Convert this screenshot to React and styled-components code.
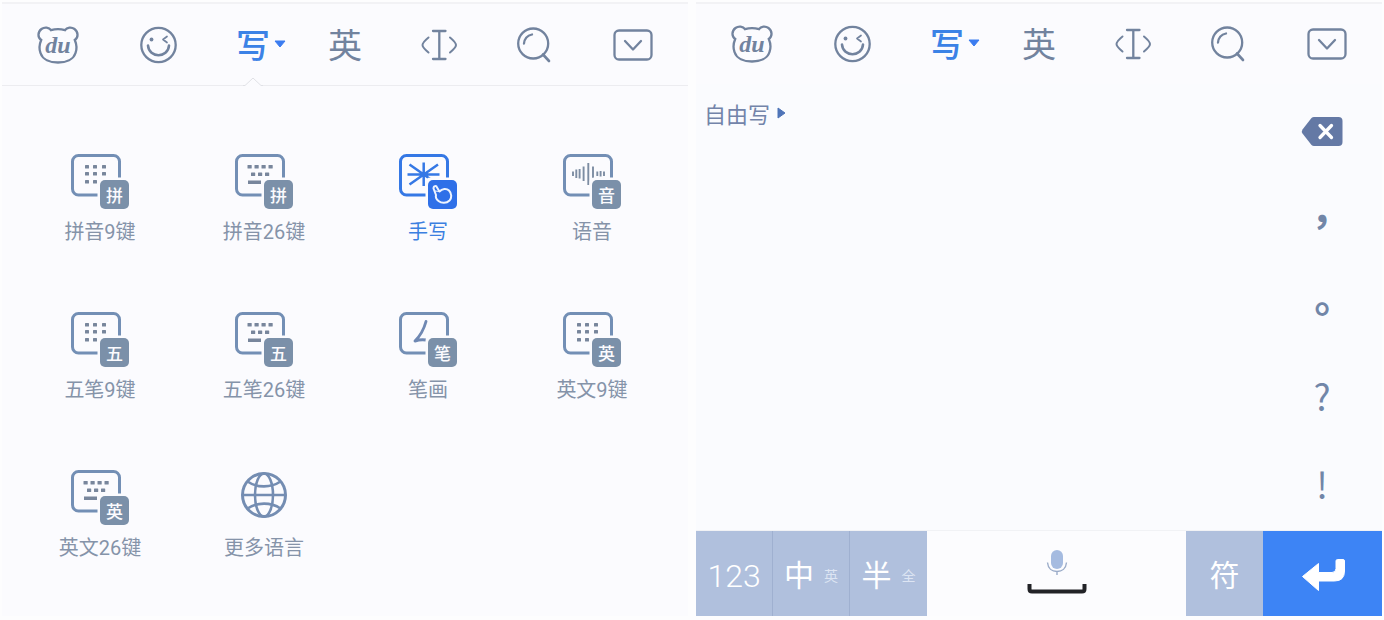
import React from "react";
import styled, { createGlobalStyle, css } from "styled-components";

const cjk = `"Noto Sans CJK SC", "Noto Sans", sans-serif`;

const GlobalStyle = createGlobalStyle`
* {
box-sizing: border-box;
}
body {
margin: 0;
background-color: #fdfdfe;
font-family: Roboto, ${cjk};
}
button {
margin: 0;
padding: 0;
border: none;
background: none;
font-family: inherit;
cursor: pointer;
}
svg {
display: block;
}
`;

const Page = styled.main`
display: grid;
grid-template-columns: 1fr 1fr;
gap: 8px;
padding: 2px;
`;

const Panel = styled.section`
display: flex;
flex-direction: column;
min-width: 0;
background-color: #fbfbfe;
border-top: 2px solid #f2f2f5;
`;

const Toolbar = styled.nav`
display: flex;
justify-content: space-between;
height: ${(props) => (props.$line ? "82px" : "80px")};
padding: 0 35px;
color: #72839e;
border-bottom: ${(props) => (props.$line ? "1px solid #ececf0" : "none")};
`;

const Tool = styled.button`
position: relative;
display: flex;
align-items: center;
justify-content: center;
width: ${(props) => props.$width}px;
color: inherit;
`;

const TextTool = styled(Tool)`
padding-bottom: 2px;
font-family: ${cjk};
font-size: 34px;
line-height: 40px;
white-space: nowrap;
${(props) =>
    props.$active &&
    css`
color: #3b82e6;
font-weight: 500;
`}
`;

// hangs past the glyph so the tools stay evenly spaced
const Caret = styled.svg`
flex: none;
margin-left: 4px;
margin-right: -16px;
`;

const Notch = styled.svg`
position: absolute;
left: 6px;
bottom: -1px;
`;

const Modes = styled.div`
display: grid;
grid-template-columns: repeat(4, 1fr);
row-gap: 66px;
padding: 66px 14px 56px 16px;
`;

const Mode = styled.button`
display: flex;
flex-direction: column;
align-items: center;
gap: 10px;
color: ${(props) => (props.$active ? "#3b7fe0" : "#8593a9")};
font-size: 20px;
line-height: 24px;
`;

const ModeIcon = styled.span`
position: relative;
width: 60px;
height: 58px;
color: ${(props) => (props.$active ? "#3578e5" : "#738fb5")};
`;

const Badge = styled.span`
position: absolute;
right: 1px;
bottom: 1px;
display: flex;
align-items: center;
justify-content: center;
width: 29px;
height: 29px;
border-radius: 5px;
background-color: ${(props) => (props.$active ? "#2f70e8" : "#7b90a9")};
color: #fbfbfe;
font-family: ${cjk};
font-size: 17px;
font-weight: 500;
line-height: 20px;
`;

const Writing = styled.div`
display: flex;
justify-content: space-between;
align-items: flex-start;
flex: 1;
padding-top: 3px;
background-color: #fafbfe;
`;

const FreeWrite = styled.button`
display: flex;
align-items: center;
gap: 7px;
padding: 12px 8px;
color: #7384aa;
font-family: ${cjk};
font-size: 22px;
line-height: 28px;
`;

const Symbols = styled.div`
display: flex;
flex-direction: column;
width: 120px;
`;

const SymbolKey = styled.button`
display: flex;
align-items: center;
justify-content: center;
height: 88px;
color: #7186a8;
font-family: "Noto Sans CJK TC", sans-serif;
font-size: ${(props) => (props.$wide ? "40px" : "36px")};
font-weight: ${(props) => (props.$wide ? 700 : 400)};
line-height: 40px;
`;

const KeyRow = styled.div`
display: flex;
height: 86px;
border-top: 1px solid #f1f2f5;
`;

const Key = styled.button`
display: flex;
align-items: center;
justify-content: center;
gap: 10px;
width: 77px;
padding-top: 4px;
background-color: #b0c0dd;
border-right: ${(props) => (props.$divided ? "1px solid #9fb0d0" : "none")};
color: #fff;
font-size: ${(props) => (props.$digits ? "32px" : "30px")};
font-weight: ${(props) => (props.$digits ? 300 : 400)};
line-height: 40px;
`;

const Alt = styled.small`
color: #dde5f3;
font-size: 14px;
line-height: 20px;
`;

const SpaceKey = styled(Key)`
flex: 1;
flex-direction: column;
gap: 7px;
padding: 0 0 4px;
background-color: #fcfcfe;
`;

const EnterKey = styled(Key)`
width: 119px;
background-color: #3d84f5;
`;

const Bear = () => (
    <svg width="42" height="38" viewBox="0 0 42 38" fill="none" stroke="currentColor" strokeWidth="2.3">
        <path d="M14 4.2C18 3 24 3 28 4.2C30 1.200 34.500 .8 37.500 3C41.500 6 41.500 11.500 37.800 14C39.500 18 40 23 38.500 27C36.500 33.500 29 36.500 21 36.500C13 36.500 5.500 33.500 3.500 27C2 23 2.500 18 4.200 14C.5 11.500 .5 6 4.500 3C7.500 .8 12 1.200 14 4.200Z" />
        <text x="21" y="27" textAnchor="middle" fill="currentColor" stroke="none" fontFamily="Liberation Serif, serif" fontStyle="italic" fontWeight="700" fontSize="24">du</text>
    </svg>
);

const Smile = () => (
    <svg width="38" height="38" viewBox="0 0 38 38" fill="none" stroke="currentColor" strokeWidth="2.300" strokeLinecap="round" strokeLinejoin="round">
        <circle cx="19.500" cy="19" r="17.2" />
        <circle cx="12.500" cy="13.500" r="1.900" fill="currentColor" stroke="none" />
        <path d="M28 10.500L24 13.500L28 16.500" strokeWidth="1.700" />
        <path d="M9 19.500C9.500 26 14.500 29.300 19.500 29.300C24.500 29.300 29.500 26 30 19.500" strokeWidth="2.600" />
    </svg>
);

const Cursor = () => (
    <svg width="36" height="34" viewBox="0 0 36 34" fill="none" stroke="currentColor" strokeWidth="2.300" strokeLinecap="round">
        <path d="M12 3H24.500M12 31H24.500M18.300 3V31" />
        <path d="M7.500 9.500C4.500 12 1.500 15 1.500 17C1.500 19 4.500 22 7.500 24.500M29 9.500C32 12 35 15 35 17C35 19 32 22 29 24.500" strokeWidth="2" />
    </svg>
);

const Search = () => (
    <svg width="36" height="36" viewBox="0 0 36 36" fill="none" stroke="currentColor" strokeWidth="2.300" strokeLinecap="round">
        <circle cx="16.200" cy="16.500" r="15" />
        <path d="M7 16.500C7.500 11.500 10.500 8.500 15 7.500" />
        <path d="M26 27.500L32 34" strokeWidth="2.600" />
    </svg>
);

const Collapse = () => (
    <svg width="40" height="32" viewBox="0 0 40 32" fill="none" stroke="currentColor" strokeWidth="2.300" strokeLinecap="round" strokeLinejoin="round">
        <rect x="1.500" y="1.500" width="37" height="29" rx="4.500" />
        <path d="M12 12L20 20.500L28 12" />
    </svg>
);

const NotchMark = () => (
    <Notch width="20" height="9" viewBox="0 0 20 9">
        <path d="M1 9L10 1L19 9Z" fill="#fbfbfe" />
        <path d="M0 8.500H2L10 1L18 8.500H20" fill="none" stroke="#e0e1e6" />
    </Notch>
);

const Dots = () => (
    <g fill="#78869c">
        {[15, 22, 30].map((y) =>
            [17, 25, 34].map((x) => <rect key={`${x}-${y}`} x={x - 2} y={y - 2} width="4" height="3.500" rx=".5" />)
        )}
    </g>
);

const Keys = () => (
    <g fill="#78869c">
        {[15.500, 22.500, 29.500, 36.500].map((x) => <rect key={x} x={x - 2} y="13" width="4.200" height="3.500" rx=".5" />)}
        {[19, 26, 33].map((x) => <rect key={x} x={x - 2} y="20.500" width="4.200" height="3.500" rx=".5" />)}
        <rect x="14" y="28.500" width="13" height="3.500" />
    </g>
);

const Star = () => (
    <path d="M9.500 22.500H41.500M25.700 10.500V34M11.500 12.500L40 32.500M40 12.500L11.500 32.500" stroke="currentColor" strokeWidth="2.500" />
);

const Voice = () => (
    <path d="M11 19.500V24M14.300 17.500V26M17.600 17V26.500M21.600 14.500V29M26.300 11V33M31 14.500V29M35.300 19.500V24M38.600 19V24.500M42 19.500V24" stroke="#7d8da3" strokeWidth="1.900" />
);

const Stroke = () => (
    <path d="M28 11.500C26 19 22 26 17 31C20 30 24 29.500 28 30" fill="none" stroke="#6f88b3" strokeWidth="2.900" strokeLinecap="round" strokeLinejoin="round" />
);

const Hand = () => (
    <svg width="23" height="23" viewBox="0 0 23 23" fill="none" stroke="#eef4ff" strokeWidth="2" strokeLinecap="round" strokeLinejoin="round">
        <path d="M5 12L2.500 5.500C2.500 2.500 5.500 2.500 6 4.500L8.500 8.500C11 5.500 15.500 5 18 7.500C21 10.500 20.800 15 18.500 17.500C15.500 20.500 10.500 20.500 7.500 18C5.500 16.500 4.500 14 5 12Z" />
        <path d="M4 8L8.500 8.500" strokeWidth="1.200" />
    </svg>
);

const Globe = () => (
    <svg width="60" height="58" viewBox="0 0 60 58" fill="none" stroke="#748db2" strokeWidth="2.600">
        <circle cx="30" cy="27" r="21.500" strokeWidth="3" />
        <ellipse cx="30" cy="27" rx="9" ry="21.500" />
        <path d="M8 27H52M13.500 13.500C23 20 37 20 46.500 13.500M13.500 40.500C23 34 37 34 46.500 40.500" />
    </svg>
);

const drawings = { dots: Dots, keys: Keys, star: Star, voice: Voice, stroke: Stroke };

const Board = ({ drawing }) => {
    const Drawing = drawings[drawing];
    return (
        <svg width="60" height="58" viewBox="0 0 60 58">
            <rect x="2.500" y="3.500" width="47" height="39.500" rx="6" fill="none" stroke="currentColor" strokeWidth="3" />
            <Drawing />
            <path d="M27.500 58V31Q27.500 25.500 32.500 25.500H60V58Z" fill="#fbfbfe" />
        </svg>
    );
};

const modes = [
    { label: "拼音9键", drawing: "dots", badge: "拼" },
    { label: "拼音26键", drawing: "keys", badge: "拼" },
    { label: "手写", drawing: "star", badge: <Hand />, active: true },
    { label: "语音", drawing: "voice", badge: "音" },
    { label: "五笔9键", drawing: "dots", badge: "五" },
    { label: "五笔26键", drawing: "keys", badge: "五" },
    { label: "笔画", drawing: "stroke", badge: "笔" },
    { label: "英文9键", drawing: "dots", badge: "英" },
    { label: "英文26键", drawing: "keys", badge: "英" },
    { label: "更多语言" },
];

const Tools = ({ line }) => (
    <Toolbar $line={line}>
        <Tool $width={42} aria-label="du"><Bear /></Tool>
        <Tool $width={38} aria-label="表情"><Smile /></Tool>
        <TextTool $width={32} $active>
            写
            <Caret width="12" height="8" viewBox="0 0 12 8">
                <path d="M1 1H11L6 7Z" fill="#3b7cf0" stroke="#3b7cf0" strokeLinejoin="round" />
            </Caret>
            {line && <NotchMark />}
        </TextTool>
        <TextTool $width={32}>英</TextTool>
        <Tool $width={36} aria-label="光标"><Cursor /></Tool>
        <Tool $width={36} aria-label="搜索"><Search /></Tool>
        <Tool $width={40} aria-label="收起"><Collapse /></Tool>
    </Toolbar>
);

const App = () => {
    return (
        <>
            <GlobalStyle />
            <Page>
                <Panel>
                    <Tools line />
                    <Modes>
                        {modes.map((mode) => (
                            <Mode key={mode.label} $active={mode.active}>
                                <ModeIcon $active={mode.active}>
                                    {mode.drawing ? <Board drawing={mode.drawing} /> : <Globe />}
                                    {mode.badge && <Badge $active={mode.active}>{mode.badge}</Badge>}
                                </ModeIcon>
                                {mode.label}
                            </Mode>
                        ))}
                    </Modes>
                </Panel>
                <Panel>
                    <Tools />
                    <Writing>
                        <FreeWrite>
                            自由写
                            <svg width="9" height="12" viewBox="0 0 9 12">
                                <path d="M1 1L8 6L1 11Z" fill="#4f74b8" stroke="#4f74b8" strokeLinejoin="round" />
                            </svg>
                        </FreeWrite>
                        <Symbols>
                            <SymbolKey aria-label="删除">
                                <svg width="42" height="31" viewBox="0 0 42 31">
                                    <path d="M13 1H37.500Q41.500 1 41.500 5V26Q41.500 30 37.500 30H13Q11.500 30 10.500 29L1.500 17.500Q.2 15.500 1.500 13.500L10.500 2Q11.500 1 13 1Z" fill="#6479a5" />
                                    <path d="M19 9.500L30.500 21.500M30.500 9.500L19 21.500" stroke="#fff" strokeWidth="3.300" strokeLinecap="round" />
                                </svg>
                            </SymbolKey>
                            <SymbolKey $wide>，</SymbolKey>
                            <SymbolKey $wide>。</SymbolKey>
                            <SymbolKey>?</SymbolKey>
                            <SymbolKey>!</SymbolKey>
                        </Symbols>
                    </Writing>
                    <KeyRow>
                        <Key $divided $digits>123</Key>
                        <Key $divided>中<Alt>英</Alt></Key>
                        <Key>半<Alt>全</Alt></Key>
                        <SpaceKey aria-label="空格">
                            <svg width="22" height="26" viewBox="0 0 22 26" fill="none">
                                <rect x="5" y="0" width="12" height="19" rx="6" fill="#a5bbe0" />
                                <path d="M1.500 12.500C2 18.500 6 21.500 11 21.500C16 21.500 20 18.500 20.500 12.500M11 21.500V25" stroke="#9aabc8" strokeWidth="1.400" />
                            </svg>
                            <svg width="60" height="11" viewBox="0 0 60 11">
                                <path d="M2.500 1V6Q2.500 8.500 5 8.500H55Q57.500 8.500 57.500 6V1" fill="none" stroke="#222327" strokeWidth="4" />
                            </svg>
                        </SpaceKey>
                        <Key>符</Key>
                        <EnterKey aria-label="换行">
                            <svg width="44" height="33" viewBox="0 0 44 33">
                                <path d="M1.500 17.500L17.500 4.500V13.500H31Q35 13.500 35 9.500V2Q35 .5 36.500 .5H42Q43.500 .5 43.500 2V12Q43.500 22 33.500 22H17.500V31.500Z" fill="#fff" stroke="#fff" strokeLinejoin="round" />
                            </svg>
                        </EnterKey>
                    </KeyRow>
                </Panel>
            </Page>
        </>
    );
};

export default App;
